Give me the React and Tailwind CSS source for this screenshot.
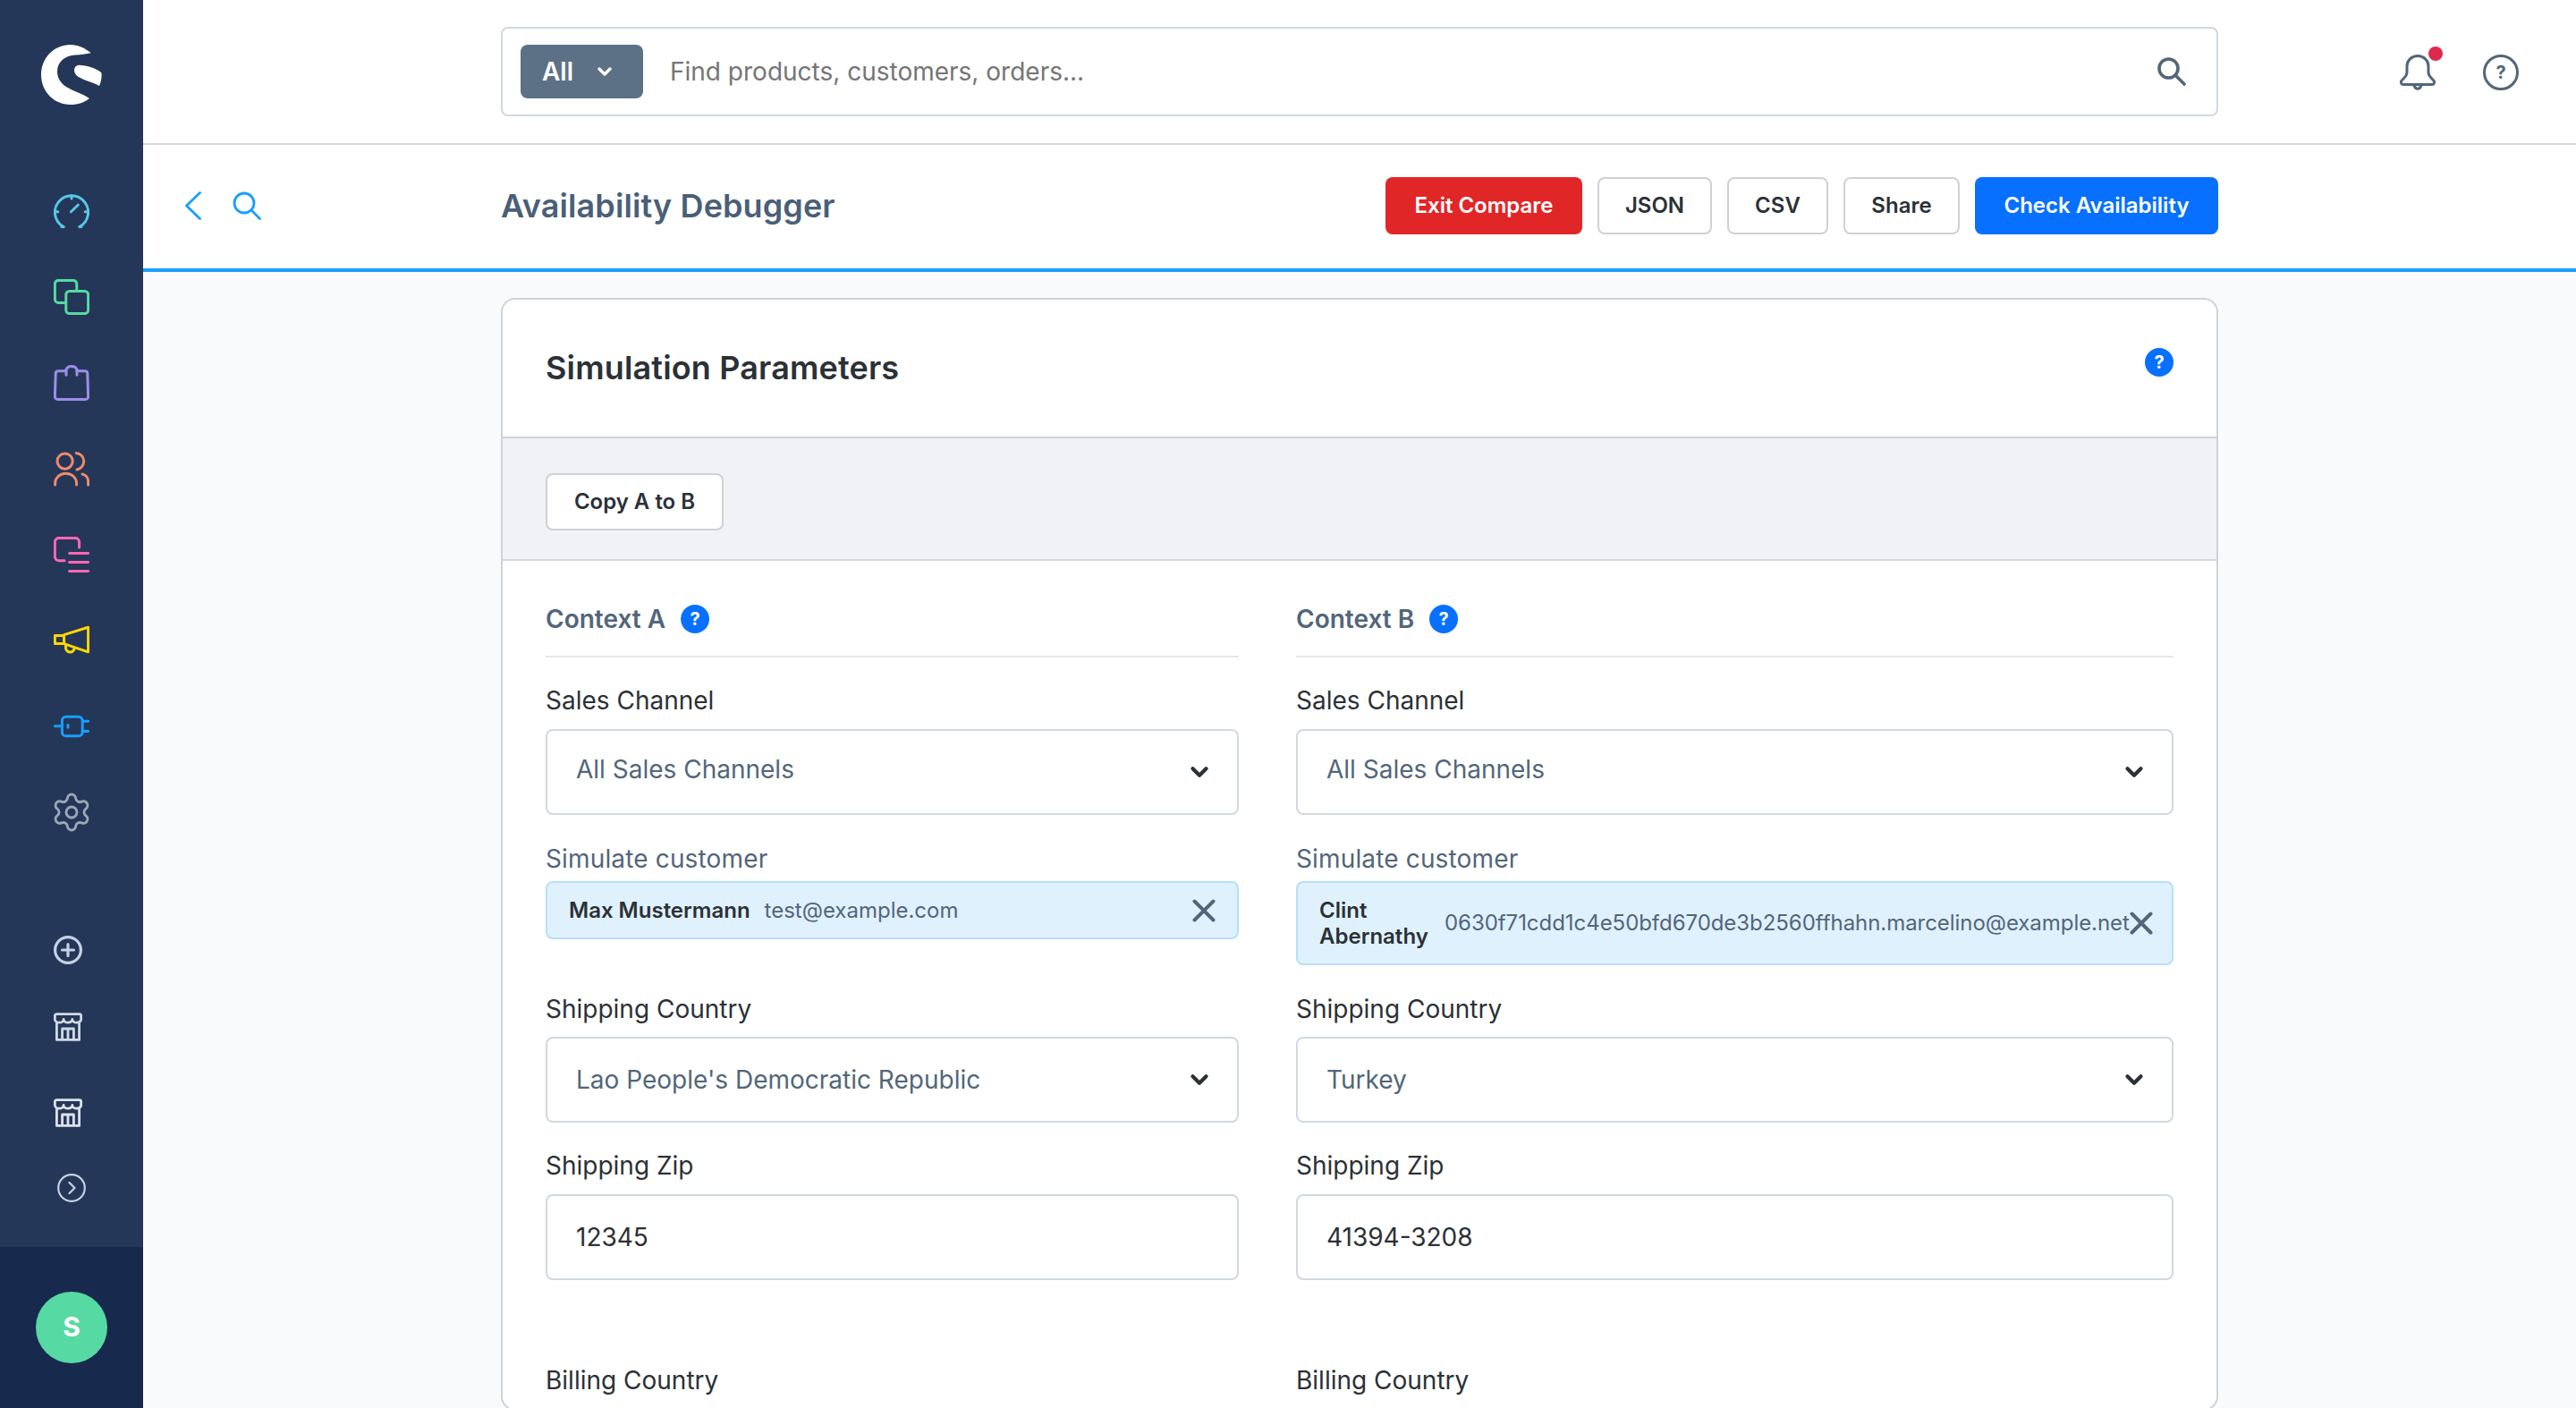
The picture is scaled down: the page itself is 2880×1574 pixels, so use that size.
import { ChevronDown, Settings } from "lucide-react";

function NavIcon({ children, color, box = 20 }) {
  return (
    <svg
      width="40"
      height="40"
      viewBox={`0 0 ${box} ${box}`}
      fill="none"
      stroke={color}
      strokeWidth="1.5"
      strokeLinecap="round"
      strokeLinejoin="round"
    >
      {children}
    </svg>
  );
}

function StoreIcon({ color }) {
  return (
    <svg width="32" height="32" viewBox="0 0 16 16" fill="none" stroke={color} strokeWidth="1.4" strokeLinecap="round" strokeLinejoin="round">
      <path d="M1.6.8h12.8a.9.9 0 0 1 .9.9v2a2.43 1.9 0 0 1-4.87 0 2.43 1.9 0 0 1-4.87 0 2.43 1.9 0 0 1-4.87 0v-2a.9.9 0 0 1 .9-.9Z" />
      <path d="M1.700 6.200v9h12.600v-9M4.800 15.200V9h6.400v6.200M8 9v6.200" />
    </svg>
  );
}

const menu = [
  <NavIcon color="#57c7e3" key="dash">
    <path d="M5.500 18.800A9.300 9.300 0 1 1 14.500 18.800" />
    <path d="M4.500 18.800h1M14.500 18.800h1M10 1.400v1.600M.8 10.400h1.600M17.600 10.400h1.600M9.700 10.400l4-3.900" />
  </NavIcon>,
  <NavIcon color="#57d9a3" key="prod">
    <rect x="6.900" y="6.700" width="12.400" height="12.600" rx="2" />
    <path d="M6.200 13.200H2.700a2 2 0 0 1-2-2V2.700a2 2 0 0 1 2-2h8.200a2 2 0 0 1 2 2v3.600" />
  </NavIcon>,
  <NavIcon color="#9a8ee8" key="ord">
    <path d="M7 3.400H2.600a1.500 1.500 0 0 0-1.500 1.400L.7 17.600a1.500 1.500 0 0 0 1.500 1.600h15.600a1.500 1.500 0 0 0 1.500-1.600L18.900 4.800a1.500 1.500 0 0 0-1.500-1.400H13" />
    <path d="M7 5.600V3a3 2.300 0 0 1 6 0v2.600" />
  </NavIcon>,
  <NavIcon color="#f08a6c" key="cust">
    <circle cx="6.300" cy="5.800" r="4.300" />
    <path d="M12.600 1.200a4.700 4.700 0 0 1 .4 9.300M.8 19v-.8a6 5.600 0 0 1 12 0v.8M16 13a4.200 4.200 0 0 1 3.300 4.200V19" />
  </NavIcon>,
  <NavIcon color="#ff68b4" key="cont">
    <path d="M6 13.400H3a2.300 2.300 0 0 1-2.300-2.300V3A2.300 2.300 0 0 1 3 .7h9a2.300 2.300 0 0 1 2.300 2.300v3" />
    <path d="M8.800 9.200h10.500M8.800 14.200h10.500M8.800 19.200h10.500" />
  </NavIcon>,
  <NavIcon color="#ffd700" key="mark">
    <path d="M5.800 6.800 19.300 2.600v13.800L5.800 11.800Z" />
    <path d="M5.800 7.200H.7v4.600h5.100M6.800 12.200v1.600a2.400 2.400 0 0 0 4.800.6" />
  </NavIcon>,
  <NavIcon color="#189eff" key="ext">
    <rect x="4.700" y="4.600" width="11.400" height="10.800" rx="2.200" />
    <path d="M.7 9.900h4M16.100 7.100h3.200M16.100 12.700h3.200M8 9.300v1.300" />
  </NavIcon>,
];

function BlueHelp() {
  return (
    <span className="flex h-[32px] w-[32px] shrink-0 items-center justify-center rounded-full bg-[#0870ff] text-[20px] font-bold leading-none text-white">
      ?
    </span>
  );
}

function Label({ children, muted, gap = "mb-[12px]", top = "mt-[29px]" }) {
  return (
    <div className={`${top} ${gap} text-[28px] leading-[40px] ${muted ? "tracking-[0.15px] text-[#52667a]" : "text-[#2b3136]"}`}>
      {children}
    </div>
  );
}

function SelectBox({ value, raised }) {
  return (
    <div className="flex h-[96px] items-center justify-between rounded-[8px] border-2 border-[#d1d9e0] bg-white pl-[32px] pr-[27px]">
      <span className={`text-[28px] leading-[40px] text-[#52667a] ${raised ? "pb-[6px]" : ""}`}>{value}</span>
      <ChevronDown size={30} strokeWidth={3.4} className="text-[#2b3136]" />
    </div>
  );
}

function CloseIcon() {
  return (
    <svg width="26" height="26" viewBox="0 0 26 26" fill="none" stroke="#52667a" strokeWidth="4" strokeLinecap="round" className="shrink-0">
      <path d="M2.500 2.500l21 21M23.500 2.500l-21 21" />
    </svg>
  );
}

function Context({ title, customer, country, zip }) {
  return (
    <div>
      <div className="flex items-center gap-[17px] border-b-2 border-[#e4e8ec] pb-[25px]">
        <span className="text-[28px] font-semibold leading-[32px] text-[#52667a]">{title}</span>
        <BlueHelp />
      </div>
      <Label top="mt-[28px]">Sales Channel</Label>
      <SelectBox value="All Sales Channels" raised />
      <Label muted gap="mb-[5px]">Simulate customer</Label>
      <div className="h-[94px]">{customer}</div>
      <Label gap="mb-[11px]">Shipping Country</Label>
      <SelectBox value={country} />
      <Label top="mt-[28px]">Shipping Zip</Label>
      <div className="flex h-[96px] items-center rounded-[8px] border-2 border-[#d1d9e0] bg-white px-[32px] text-[28px] text-[#2b3136]">
        {zip}
      </div>
      <Label top="mt-[92px]">Billing Country</Label>
    </div>
  );
}

const outlineBtn =
  "h-[64px] rounded-[8px] border-2 border-[#cfd1d4] bg-white text-[24px] font-semibold text-[#2b3136]";

export default function App() {
  return (
    <div className="flex h-screen overflow-hidden bg-[#f9fafb] font-['Inter',sans-serif]">
      <aside className="flex w-[160px] shrink-0 flex-col bg-[#243758]">
        <div className="h-[188px] pl-[46px] pt-[50px]">
          <svg width="68" height="68" viewBox="0 0 68 68" fill="#fff">
            <path d="M55.700 9.300C49 3.500 41 0 33 0 14 0 0 15 0 33.500 0 52 14 67 33 67c8 0 15.500-2.500 21-7-7-5-18-8-26-13-6-4-10-10-10-17 0-11 9-18 20-18.500 6-.3 12-1 17.700-2.200Z" />
            <path d="M42 22.700c9 .3 20 3.300 25.500 8.800.5 4.500-.5 10.500-2.500 14.500-7-4-17-6-24-10.500-5-3.500-6-11.500 1-12.800Z" />
          </svg>
        </div>
        {menu.map((icon) => (
          <div key={icon.key} className="flex h-[96px] items-center justify-center">
            {icon}
          </div>
        ))}
        <div className="flex h-[96px] items-center justify-center">
          <Settings size={48} strokeWidth={1.45} className="text-[#9aa8b5]" />
        </div>
        <div className="mt-[58px] flex h-[96px] items-center pl-[60px]">
          <svg width="32" height="32" viewBox="0 0 32 32" fill="none" stroke="#c5d2e3" strokeWidth="3.200" strokeLinecap="round">
            <circle cx="16" cy="16" r="14.400" />
            <path d="M16 9.500v13M9.500 16h13" />
          </svg>
        </div>
        <div className="flex h-[76px] items-center pl-[60px]">
          <StoreIcon color="#d0d9e6" />
        </div>
        <div className="flex h-[116px] items-center pl-[60px]">
          <StoreIcon color="#dde3ed" />
        </div>
        <div className="flex h-[52px] items-center pl-[64px]">
          <svg width="32" height="32" viewBox="0 0 32 32" fill="none" stroke="#c5d2e3" strokeWidth="2.200" strokeLinecap="round" strokeLinejoin="round">
            <circle cx="16" cy="16" r="14.800" />
            <path d="m13.500 10 6 6-6 6" />
          </svg>
        </div>
        <div className="mt-auto flex h-[180px] items-center justify-center bg-[#172a4e]">
          <div className="flex h-[80px] w-[80px] items-center justify-center rounded-full bg-[#57d9a3] pb-[2px] text-[30px] font-bold text-white">
            S
          </div>
        </div>
      </aside>

      <main className="min-w-0 flex-1">
        <div className="grid h-[162px] grid-cols-[400px_1920px_1fr] border-b-2 border-[#d1d9e0] bg-white">
          <div />
          <div className="mt-[30px] flex h-[100px] items-center rounded-[8px] border-2 border-[#d1d9e0] pl-[20px] pr-[34px]">
            <div className="flex h-[60px] w-[137px] items-center gap-[23px] rounded-[8px] bg-[#5d7186] pl-[24px] text-[28px] font-semibold text-white">
              All
              <ChevronDown size={24} strokeWidth={3.4} />
            </div>
            <span className="ml-[30px] flex-1 text-[28px] text-[#757575]">Find products, customers, orders...</span>
            <svg width="32" height="32" viewBox="0 0 32 32" fill="none" stroke="#52667a" strokeWidth="3.600" strokeLinecap="round">
              <circle cx="12.500" cy="12.500" r="10.500" />
              <path d="m20.500 20.500 9.500 9.500" />
            </svg>
          </div>
          <div className="flex items-center justify-end gap-[53px] pr-[64px] pt-[1px]">
            <div className="relative">
              <svg width="40" height="40" viewBox="0 0 40 40" fill="none" stroke="#52667a" strokeWidth="3" strokeLinecap="round" strokeLinejoin="round" className="block">
                <path d="M20 1.500c-6.800 0-12 5-12 11.500v7c0 2.500-1.500 4.500-3.500 6.500L2.200 29A2.600 2.600 0 0 0 4 33.500h32a2.600 2.600 0 0 0 1.800-4.500l-2.300-2.500C33.500 24.500 32 22.500 32 20v-7c0-6.500-5.200-11.500-12-11.500Z" />
                <path d="M16 34.500c.8 2.500 2.200 3.800 4 3.800s3.200-1.300 4-3.800" />
              </svg>
              <span className="absolute right-[-8px] top-[-9px] h-[16px] w-[16px] rounded-full bg-[#de294c]" />
            </div>
            <div className="flex h-[40px] w-[40px] items-center justify-center rounded-full border-[3px] border-[#52667a] text-[20px] font-bold text-[#52667a]">
              ?
            </div>
          </div>
        </div>

        <div className="grid h-[142px] grid-cols-[400px_1920px_1fr] items-center border-b-4 border-[#189eff] bg-white pb-[2px]">
          <div className="flex items-center gap-[35px] pl-[47px]">
            <svg width="18" height="32" viewBox="0 0 18 32" fill="none" stroke="#189eff" strokeWidth="2.800" strokeLinecap="round" strokeLinejoin="round">
              <path d="M16.500 1.500 1.500 16l15 14.500" />
            </svg>
            <svg width="32" height="32" viewBox="0 0 32 32" fill="none" stroke="#189eff" strokeWidth="2.800" strokeLinecap="round">
              <circle cx="13" cy="13" r="11" />
              <path d="m21 21 9.500 9.500" />
            </svg>
          </div>
          <div className="flex items-center justify-between">
            <h1 className="text-[36px] font-semibold tracking-[0.1px] text-[#4a5f78]">Availability Debugger</h1>
            <div className="flex gap-[17px]">
              <button className="h-[64px] w-[220px] rounded-[8px] bg-[#e12628] text-[24px] font-semibold text-white">Exit Compare</button>
              <button className={`${outlineBtn} w-[128px]`}>JSON</button>
              <button className={`${outlineBtn} w-[113px]`}>CSV</button>
              <button className={`${outlineBtn} w-[130px]`}>Share</button>
              <button className="h-[64px] w-[272px] rounded-[8px] bg-[#0870ff] text-[24px] font-semibold text-white">Check Availability</button>
            </div>
          </div>
        </div>

        <div className="mx-auto mt-[29px] w-[1920px] rounded-[16px] border-2 border-[#cfd3d8] bg-white">
          <div className="flex h-[155px] justify-between border-b-2 border-[#cfd3d8] px-[48px]">
            <h2 className="mt-[52px] text-[36px] font-semibold leading-[48px] tracking-[0.15px] text-[#2b3136]">Simulation Parameters</h2>
            <div className="mt-[54px]">
              <BlueHelp />
            </div>
          </div>
          <div className="h-[137px] border-b-2 border-[#d1d9e0] bg-[#f0f2f5] px-[48px] pt-[39px]">
            <button className={`${outlineBtn} w-[199px]`}>Copy A to B</button>
          </div>
          <div className="grid grid-cols-[775px_981px] gap-x-[64px] px-[48px] pt-[49px]">
            <Context
              title="Context A"
              country="Lao People's Democratic Republic"
              zip="12345"
              customer={
                <div className="flex h-[65px] items-center rounded-[8px] border-2 border-[#b8def8] bg-[#e0f1fe] px-[24px] text-[24px]">
                  <span className="font-semibold text-[#2b3136]">Max Mustermann</span>
                  <span className="ml-[16px] flex-1 text-[#52667a]">test@example.com</span>
                  <CloseIcon />
                </div>
              }
            />
            <Context
              title="Context B"
              country="Turkey"
              zip="41394-3208"
              customer={
                <div className="flex h-[94px] items-center rounded-[8px] border-2 border-[#b8def8] bg-[#e0f1fe] pl-[24px] pr-[24px] text-[24px]">
                  <span className="w-[122px] shrink-0 font-semibold leading-[29px] text-[#2b3136]">Clint Abernathy</span>
                  <span className="ml-[18px] flex-1 tracking-[-0.05px] text-[#52667a]">0630f71cdd1c4e50bfd670de3b2560ffhahn.marcelino@example.net</span>
                  <CloseIcon />
                </div>
              }
            />
          </div>
        </div>
      </main>
    </div>
  );
}
